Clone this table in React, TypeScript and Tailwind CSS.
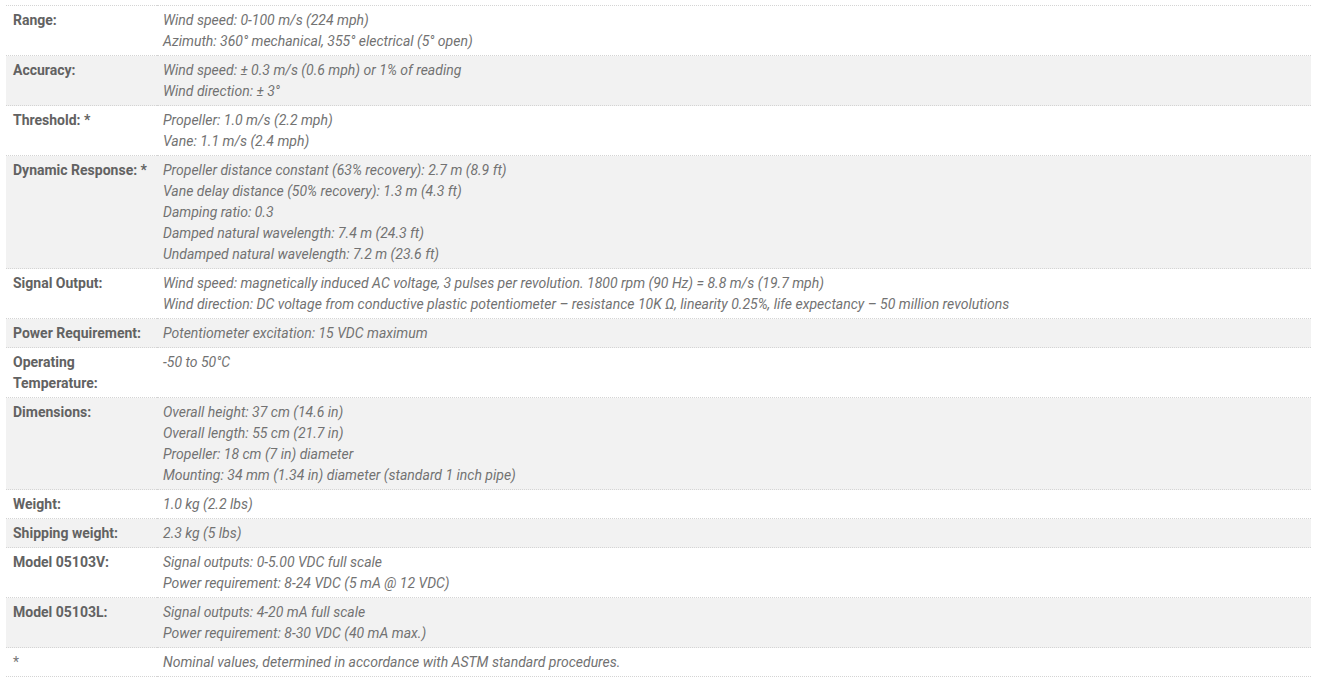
const specs: { label: string; lines: string[] }[] = [
  { label: 'Range:', lines: ['Wind speed: 0-100 m/s (224 mph)', 'Azimuth: 360° mechanical, 355° electrical (5° open)'] },
  { label: 'Accuracy:', lines: ['Wind speed: ± 0.3 m/s (0.6 mph) or 1% of reading', 'Wind direction: ± 3°'] },
  { label: 'Threshold: *', lines: ['Propeller: 1.0 m/s (2.2 mph)', 'Vane: 1.1 m/s (2.4 mph)'] },
  {
    label: 'Dynamic Response: *',
    lines: [
      'Propeller distance constant (63% recovery): 2.7 m (8.9 ft)',
      'Vane delay distance (50% recovery): 1.3 m (4.3 ft)',
      'Damping ratio: 0.3',
      'Damped natural wavelength: 7.4 m (24.3 ft)',
      'Undamped natural wavelength: 7.2 m (23.6 ft)',
    ],
  },
  {
    label: 'Signal Output:',
    lines: [
      'Wind speed: magnetically induced AC voltage, 3 pulses per revolution. 1800 rpm (90 Hz) = 8.8 m/s (19.7 mph)',
      'Wind direction: DC voltage from conductive plastic potentiometer – resistance 10K Ω, linearity 0.25%, life expectancy – 50 million revolutions',
    ],
  },
  { label: 'Power Requirement:', lines: ['Potentiometer excitation: 15 VDC maximum'] },
  { label: 'Operating Temperature:', lines: ['-50 to 50°C'] },
  {
    label: 'Dimensions:',
    lines: [
      'Overall height: 37 cm (14.6 in)',
      'Overall length: 55 cm (21.7 in)',
      'Propeller: 18 cm (7 in) diameter',
      'Mounting: 34 mm (1.34 in) diameter (standard 1 inch pipe)',
    ],
  },
  { label: 'Weight:', lines: ['1.0 kg (2.2 lbs)'] },
  { label: 'Shipping weight:', lines: ['2.3 kg (5 lbs)'] },
  { label: 'Model 05103V:', lines: ['Signal outputs: 0-5.00 VDC full scale', 'Power requirement: 8-24 VDC (5 mA @ 12 VDC)'] },
  { label: 'Model 05103L:', lines: ['Signal outputs: 4-20 mA full scale', 'Power requirement: 8-30 VDC (40 mA max.)'] },
  { label: '*', lines: ['Nominal values, determined in accordance with ASTM standard procedures.'] },
];

export default function App() {
  return (
    <div className="bg-white pt-[5px] pl-[6px] w-[1325px] h-[690px]" style={{ fontFamily: 'Roboto, "Liberation Sans", sans-serif' }}>
      <table className="w-[1305px] border-collapse text-[14px] leading-[21px]">
        <tbody>
          {specs.map((row, i) => (
            <tr key={i} className={i % 2 === 1 ? 'bg-[#f2f2f2]' : 'bg-white'}>
              <td className="w-[151px] align-top border-t border-b border-dotted border-[#d4d4d4] pl-[7px] pr-[4px] pt-[4px] pb-[3px] font-bold text-[#626262]">
                {row.label === '*' ? <span className="font-normal text-[#777777]">*</span> : row.label}
              </td>
              <td className="align-top border-t border-b border-dotted border-[#d4d4d4] pl-[6px] pr-[6px] pt-[4px] pb-[3px] italic text-[#727272]">
                {row.lines.map((line, j) => (
                  <div key={j}>{line}</div>
                ))}
              </td>
            </tr>
          ))}
        </tbody>
      </table>
    </div>
  );
}
